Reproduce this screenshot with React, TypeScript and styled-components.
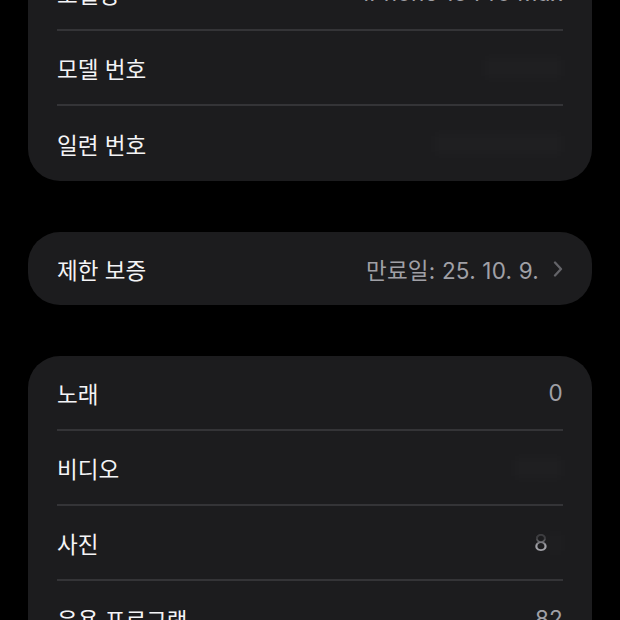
import React, { FC } from "react";
import styled, { createGlobalStyle } from "styled-components";

const GlobalStyle = createGlobalStyle`
  html, body {
    margin: 0;
    padding: 0;
    background: #000;
    overflow: hidden;
  }
  body {
    font-family: "Inter", "Noto Sans CJK KR", sans-serif;
    -webkit-font-smoothing: antialiased;
  }
`;

const Page = styled.div`
  display: flex;
  flex-direction: column;
  gap: 51px;
  padding: 0 28px;
  margin-top: -44px;
`;

const Group = styled.section`
  background: #1c1c1e;
  border-radius: 32px;
  overflow: hidden;
`;

const Row = styled.div<{ $h?: number }>`
  box-sizing: border-box;
  height: ${(p) => p.$h ?? 75}px;
  margin: 0 29px;
  display: flex;
  align-items: center;
  justify-content: space-between;
  border-bottom: 2px solid #343437;

  &:last-child {
    border-bottom: none;
  }
`;

const Label = styled.span`
  color: #f4f4f6;
  font-size: 22.5px;
`;

const Value = styled.span<{ $gap?: number }>`
  display: flex;
  align-items: center;
  gap: ${(p) => p.$gap ?? 14}px;
  color: #a0a0a6;
  font-size: 22.5px;
  letter-spacing: 0.2px;
`;

const Hidden = styled.span<{ $w: number }>`
  display: inline-block;
  width: ${(p) => p.$w}px;
  height: 24px;
  background: rgba(255, 255, 255, 0.014);
  filter: blur(6px);
`;

const Faded = styled.span`
  -webkit-mask-image: linear-gradient(to bottom, rgba(0, 0, 0, 0.25) 35%, #000 60%);
  mask-image: linear-gradient(to bottom, rgba(0, 0, 0, 0.25) 35%, #000 60%);
`;

const Chevron: FC = () => (
  <svg width="10" height="16" viewBox="0 0 10 16" fill="none">
    <path
      d="M2 1.5L8 8L2 14.5"
      stroke="#636368"
      strokeWidth="2.3"
      strokeLinecap="round"
      strokeLinejoin="round"
    />
  </svg>
);

export const App: FC = () => {
  return (
    <>
      <GlobalStyle />
      <Page>
        <Group>
          <Row>
            <Label>모델명</Label>
            <Value>iPhone 15 Pro Max</Value>
          </Row>
          <Row>
            <Label>모델 번호</Label>
            <Value>
              <Hidden $w={80} />
            </Value>
          </Row>
          <Row>
            <Label>일련 번호</Label>
            <Value>
              <Hidden $w={130} />
            </Value>
          </Row>
        </Group>

        <Group>
          <Row $h={73}>
            <Label>제한 보증</Label>
            <Value>
              만료일: 25. 10. 9.
              <Chevron />
            </Value>
          </Row>
        </Group>

        <Group>
          <Row>
            <Label>노래</Label>
            <Value>0</Value>
          </Row>
          <Row>
            <Label>비디오</Label>
            <Value>
              <Hidden $w={50} />
            </Value>
          </Row>
          <Row>
            <Label>사진</Label>
            <Value $gap={0}>
              <Faded>8</Faded>
              <Hidden $w={15} />
            </Value>
          </Row>
          <Row>
            <Label>응용 프로그램</Label>
            <Value>82</Value>
          </Row>
        </Group>
      </Page>
    </>
  );
};

export default App;
